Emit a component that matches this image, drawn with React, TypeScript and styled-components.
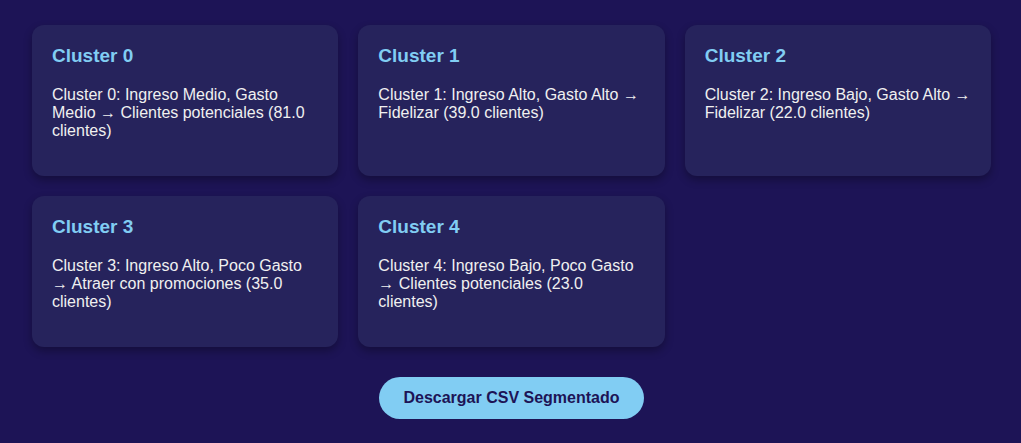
import React from "react";
import styled, { createGlobalStyle } from "styled-components";

const GlobalStyle = createGlobalStyle`
  body {
    margin: 0;
    background: #1d1456;
    color: #f0f0f0;
    font-family: "Liberation Sans", Arial, sans-serif;
    font-size: 16px;
  }
`;

const Page = styled.main`
  padding: 25px 30px 24px 32px;
`;

const Grid = styled.section`
  display: grid;
  grid-template-columns: repeat(3, 1fr);
  gap: 20px;
`;

const Card = styled.article`
  padding: 20px;
  border-radius: 12px;
  background: #26235c;
  box-shadow: 0 4px 8px rgba(0, 0, 0, 0.3);
`;

const CardTitle = styled.h3`
  margin: 0 0 19px;
  color: #81cdf3;
  font-size: 19px;
  line-height: 22px;
`;

const CardText = styled.p`
  margin: 0 0 16px;
  line-height: 18px;
`;

const Actions = styled.div`
  display: flex;
  justify-content: center;
  margin-top: 30px;
`;

const DownloadButton = styled.button`
  padding: 12px 24px;
  border: none;
  border-radius: 25px;
  background: #81cdf3;
  color: #1d1456;
  font: bold 16px/18px "Liberation Sans", Arial, sans-serif;
  cursor: pointer;
`;

const clusters = [
  "Ingreso Medio, Gasto Medio → Clientes potenciales (81.0 clientes)",
  "Ingreso Alto, Gasto Alto → Fidelizar (39.0 clientes)",
  "Ingreso Bajo, Gasto Alto → Fidelizar (22.0 clientes)",
  "Ingreso Alto, Poco Gasto → Atraer con promociones (35.0 clientes)",
  "Ingreso Bajo, Poco Gasto → Clientes potenciales (23.0 clientes)",
];

export default function App() {
  return (
    <>
      <GlobalStyle />
      <Page>
        <Grid>
          {clusters.map((description, index) => (
            <Card key={index}>
              <CardTitle>{`Cluster ${index}`}</CardTitle>
              <CardText>{`Cluster ${index}: ${description}`}</CardText>
            </Card>
          ))}
        </Grid>
        <Actions>
          <DownloadButton type="button">Descargar CSV Segmentado</DownloadButton>
        </Actions>
      </Page>
    </>
  );
}
